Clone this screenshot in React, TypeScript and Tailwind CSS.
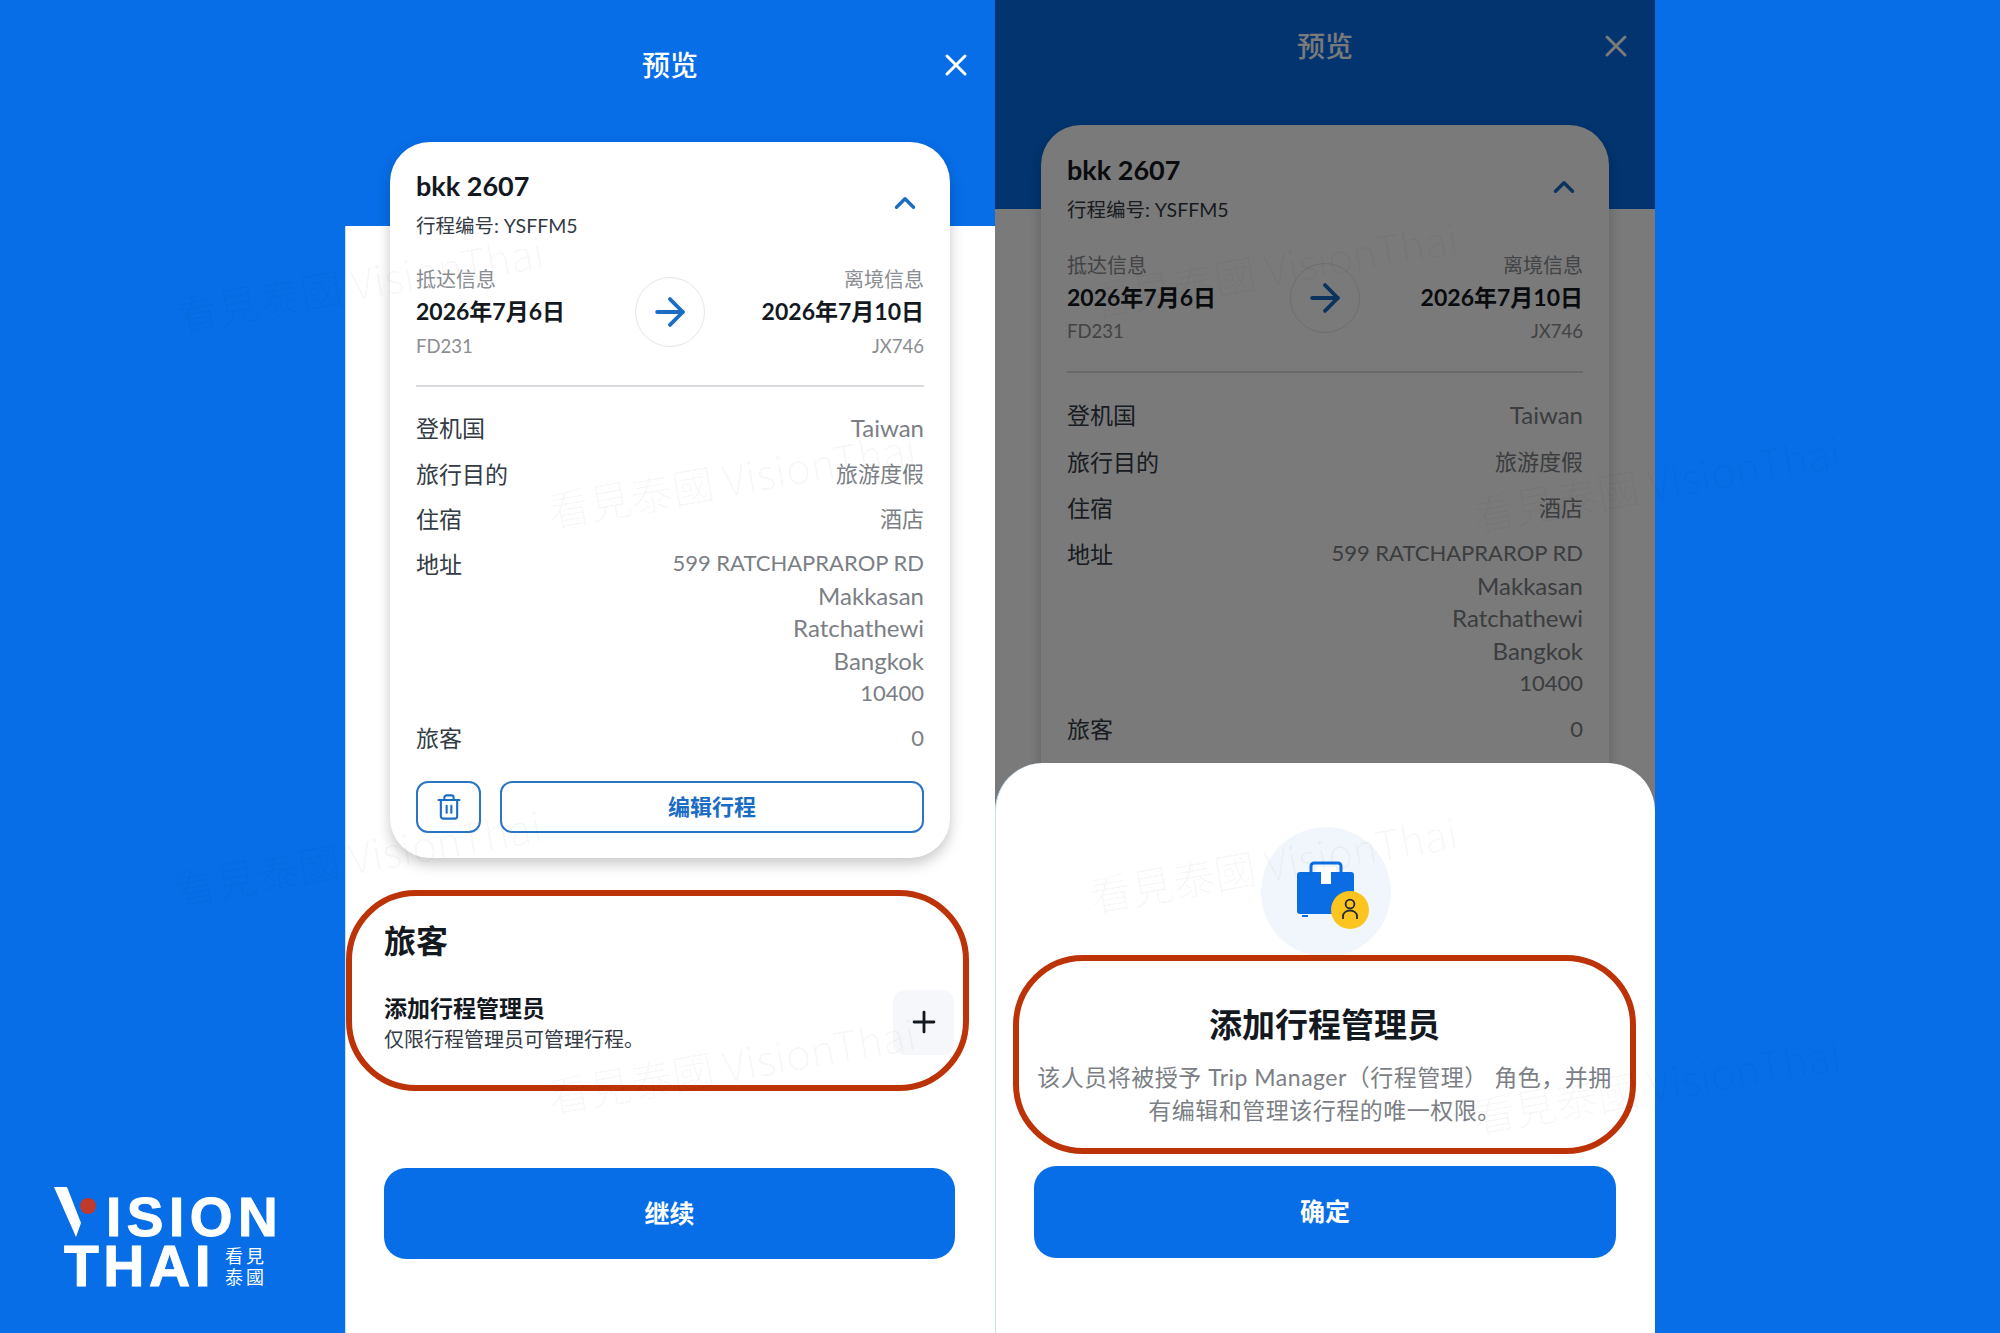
import React from 'react';
import { ArrowRight, ChevronUp, Plus, Trash2, X } from 'lucide-react';

const FONT = "font-['Lato','Noto_Sans_CJK_SC',sans-serif]";

const ADDRESS = [
  { text: '599 RATCHAPRAROP RD', size: 'text-[22px]' },
  { text: 'Makkasan', size: 'text-[24px]' },
  { text: 'Ratchathewi', size: 'text-[24px]' },
  { text: 'Bangkok', size: 'text-[24px]' },
  { text: '10400', size: 'text-[22px]' },
];

const WATERMARKS = [
  'left-[545px] top-[453px]',
  'left-[545px] top-[1039px]',
  'left-[173px] top-[257px]',
  'left-[171px] top-[831px]',
  'left-[1087px] top-[838px]',
  'left-[1470px] top-[457px]',
  'left-[1470px] top-[1059px]',
  'left-[1087px] top-[243px]',
];

// the dimmed card on the right sits a little looser than the one on the left
const LEFT_GAPS = {
  top: 'pt-[26px]',
  arrive: 'mt-[25px]',
  flight: 'mt-[4px]',
  divider: 'mt-[26px]',
  rows: 'mt-[24px]',
  rowGap: 'gap-[11px]',
  actions: 'mt-[26px]',
};

const RIGHT_GAPS = {
  top: 'pt-[27px]',
  arrive: 'mt-[27px]',
  flight: 'mt-[3px]',
  divider: 'mt-[27px]',
  rows: 'mt-[25px]',
  rowGap: 'gap-[12px]',
  actions: 'mt-[25px]',
};

const Row: React.FC<{ label: string; children: React.ReactNode }> = ({ label, children }) => (
  <div className="flex justify-between">
    <span className="text-[23px] leading-[34px] text-[#333b45]">{label}</span>
    <div className="text-right text-[22px] leading-[34px] text-[#7b7f85]">{children}</div>
  </div>
);

const TripCard: React.FC<{ gaps: typeof LEFT_GAPS; className: string }> = ({ gaps, className }) => (
  <div className={`rounded-[40px] bg-white px-[26px] pb-[25px] shadow-[0_6px_14px_rgba(0,0,0,0.22)] ${gaps.top} ${className}`}>
    <div className="flex items-center justify-between">
      <div>
        <div className="text-[27px] font-bold leading-[36px] text-[#14181f]">bkk 2607</div>
        <div className="mt-[8px] text-[19.5px] leading-[28px] text-[#333b45]">行程编号: YSFFM5</div>
      </div>
      <ChevronUp size={34} strokeWidth={2.4} className="-mt-[2px] mr-[2px] text-[#1a6cc4]" />
    </div>

    <div className={`flex items-center justify-between ${gaps.arrive}`}>
      <div className="w-[200px]">
        <div className="text-[20px] leading-[28px] text-[#8a8d92]">抵达信息</div>
        <div className="text-[23px] font-bold leading-[36px] text-[#14181f]">2026年7月6日</div>
        <div className={`text-[18.5px] leading-[26px] text-[#8a8d92] ${gaps.flight}`}>FD231</div>
      </div>
      <div className="flex h-[70px] w-[70px] items-center justify-center rounded-full border border-[#e4e6e9]">
        <ArrowRight size={44} strokeWidth={2.1} className="text-[#1a6cc4]" />
      </div>
      <div className="w-[200px] text-right">
        <div className="text-[20px] leading-[28px] text-[#8a8d92]">离境信息</div>
        <div className="text-[23px] font-bold leading-[36px] text-[#14181f]">2026年7月10日</div>
        <div className={`text-[18.5px] leading-[26px] text-[#8a8d92] ${gaps.flight}`}>JX746</div>
      </div>
    </div>

    <div className={`h-[2px] bg-[#d9dbde] ${gaps.divider}`} />

    <div className={`flex flex-col ${gaps.rows} ${gaps.rowGap}`}>
      <Row label="登机国">
        <span className="text-[24px]">Taiwan</span>
      </Row>
      <Row label="旅行目的">旅游度假</Row>
      <Row label="住宿">酒店</Row>
      <Row label="地址">
        <div className="flex flex-col leading-[32.6px]">
          {ADDRESS.map(line => (
            <span key={line.text} className={line.size}>{line.text}</span>
          ))}
        </div>
      </Row>
      <Row label="旅客">0</Row>
    </div>

    <div className={`flex gap-[19px] ${gaps.actions}`}>
      <button className="flex h-[52px] w-[65px] items-center justify-center rounded-[12px] border-2 border-[#2a76c4] text-[#1a6cc4]">
        <Trash2 size={28} strokeWidth={1.8} />
      </button>
      <button className="h-[52px] flex-1 rounded-[12px] border-2 border-[#2a76c4] text-[22px] font-semibold text-[#1a6cc4]">
        编辑行程
      </button>
    </div>
  </div>
);

const SuitcaseBadge: React.FC = () => (
  <svg viewBox="0 0 130 130" className="h-[130px] w-[130px]">
    <circle cx="65" cy="65" r="65" fill="#f1f6fc" />
    <path d="M50 47v-8a3 3 0 0 1 3-3h24a3 3 0 0 1 3 3v8" fill="none" stroke="#0a6de4" strokeWidth="3" />
    <rect x="36" y="45" width="57" height="42" rx="3" fill="#0a6de4" />
    <rect x="41" y="88" width="6" height="2" fill="#0a6de4" />
    <path d="M54 40h21v5h-5v12H60V45h-6z" fill="#fff" />
    <circle cx="89" cy="83" r="19" fill="#fcc41f" />
    <circle cx="89" cy="77" r="4.4" fill="none" stroke="#1f2937" strokeWidth="1.8" />
    <path d="M82 92v-3a7 5.5 0 0 1 14 0v3" fill="none" stroke="#1f2937" strokeWidth="1.8" />
  </svg>
);

const Logo: React.FC = () => (
  <div className="flex flex-col pb-[46px] pl-[54px] font-['Liberation_Sans',sans-serif] font-bold text-white [-webkit-text-stroke:1px_#ffffff]">
    <div className="flex h-[50px] items-end">
      <svg viewBox="0 0 52 50" className="h-[50px] w-[52px]">
        <polygon points="0,0 13,0 27,36 22,50" fill="#fff" />
        <circle cx="34" cy="19" r="8" fill="#c0392b" />
      </svg>
      <span className="text-[55px] leading-[40px] tracking-[5.5px]">ISION</span>
    </div>
    <div className="mt-[8px] flex items-center pl-[10px]">
      <span className="text-[57px] leading-[41px] tracking-[4.5px]">THAI</span>
      <div className="ml-[10px] grid grid-cols-2 gap-x-[3px] font-['Noto_Sans_CJK_TC',sans-serif] text-[18px] font-normal leading-[21px] [-webkit-text-stroke:0]">
        <span>看</span>
        <span>見</span>
        <span>泰</span>
        <span>國</span>
      </div>
    </div>
  </div>
);

export default function App() {
  return (
    <div className={`relative flex h-[1333px] w-[2000px] overflow-hidden bg-[#076ee8] ${FONT}`}>
      <aside className="flex w-[345px] flex-col justify-end">
        <Logo />
      </aside>

      {/* Preview screen */}
      <section className="flex w-[650px] flex-col bg-[linear-gradient(#076ee8_226px,transparent_226px),linear-gradient(90deg,#bfe3ff_1px,#ffffff_1px)]">
        <header className="grid h-[130px] grid-cols-[1fr_auto_1fr] items-center text-white">
          <span />
          <h1 className="text-[28px] font-medium">预览</h1>
          <X size={36} strokeWidth={2} className="mr-[21px] justify-self-end" />
        </header>
        <TripCard gaps={LEFT_GAPS} className="ml-[45px] mt-[12px] w-[560px]" />

        <div className="ml-[1px] mt-[32px] h-[201px] w-[623px] rounded-[70px] border-[6px] border-[#bb3306] pl-[32px] pr-[9px] pt-[23px]">
          <h2 className="text-[32px] font-bold leading-[44px] text-[#14181f]">旅客</h2>
          <div className="mt-[27px] flex items-center justify-between">
            <div>
              <div className="text-[23px] font-semibold leading-[32px] text-[#14181f]">添加行程管理员</div>
              <div className="mt-[1px] text-[20px] leading-[28px] text-[#333b45]">仅限行程管理员可管理行程。</div>
            </div>
            <button className="flex h-[65px] w-[61px] items-center justify-center rounded-[12px] bg-[#f5f7fa] text-[#14181f]">
              <Plus size={34} strokeWidth={2} />
            </button>
          </div>
        </div>

        <button className="ml-[39px] mt-[77px] h-[91px] w-[571px] rounded-[22px] bg-[#076ee8] text-[25px] font-semibold text-white">
          继续
        </button>
      </section>

      {/* Same screen with the trip manager sheet open */}
      <section className="relative w-[660px] overflow-hidden bg-[linear-gradient(#076ee8_209px,#ffffff_209px)]">
        <header className="grid h-[92px] grid-cols-[1fr_auto_1fr] items-center text-white">
          <span />
          <h1 className="text-[28px] font-medium">预览</h1>
          <X size={36} strokeWidth={2} className="mr-[21px] justify-self-end" />
        </header>
        <TripCard gaps={RIGHT_GAPS} className="ml-[46px] mt-[33px] w-[568px]" />

        <div className="absolute inset-0 bg-black/[0.52]" />

        <div className="absolute inset-x-0 bottom-0 top-[763px] rounded-t-[48px] border-l border-[#bfe3ff] bg-white pt-[64px]">
          <div className="flex justify-center">
            <SuitcaseBadge />
          </div>
          <div className="relative -mt-[2px] ml-[17px] h-[199px] w-[623px] rounded-[70px] border-[6px] border-[#bb3306] pt-[41px] text-center">
            <h2 className="text-[33px] font-semibold leading-[44px] text-[#14181f]">添加行程管理员</h2>
            <p className="mt-[15px] whitespace-nowrap text-[23px] leading-[33px] tracking-[0.5px] text-[#7b7f85]">
              该人员将被授予 Trip Manager（行程管理） 角色，并拥
              <br />
              有编辑和管理该行程的唯一权限。
            </p>
          </div>
          <button className="ml-[38px] mt-[12px] h-[92px] w-[582px] rounded-[22px] bg-[#076ee8] text-[25px] font-semibold text-white">
            确定
          </button>
        </div>
      </section>

      <aside className="flex-1" />

      {WATERMARKS.map(pos => (
        <div
          key={pos}
          className={`pointer-events-none absolute h-[50px] w-[370px] -rotate-[10deg] whitespace-nowrap text-center font-['Noto_Sans_CJK_TC',sans-serif] text-[42px] font-light leading-[50px] text-black/[0.035] ${pos}`}
        >
          看見泰國 VisionThai
        </div>
      ))}
    </div>
  );
}
